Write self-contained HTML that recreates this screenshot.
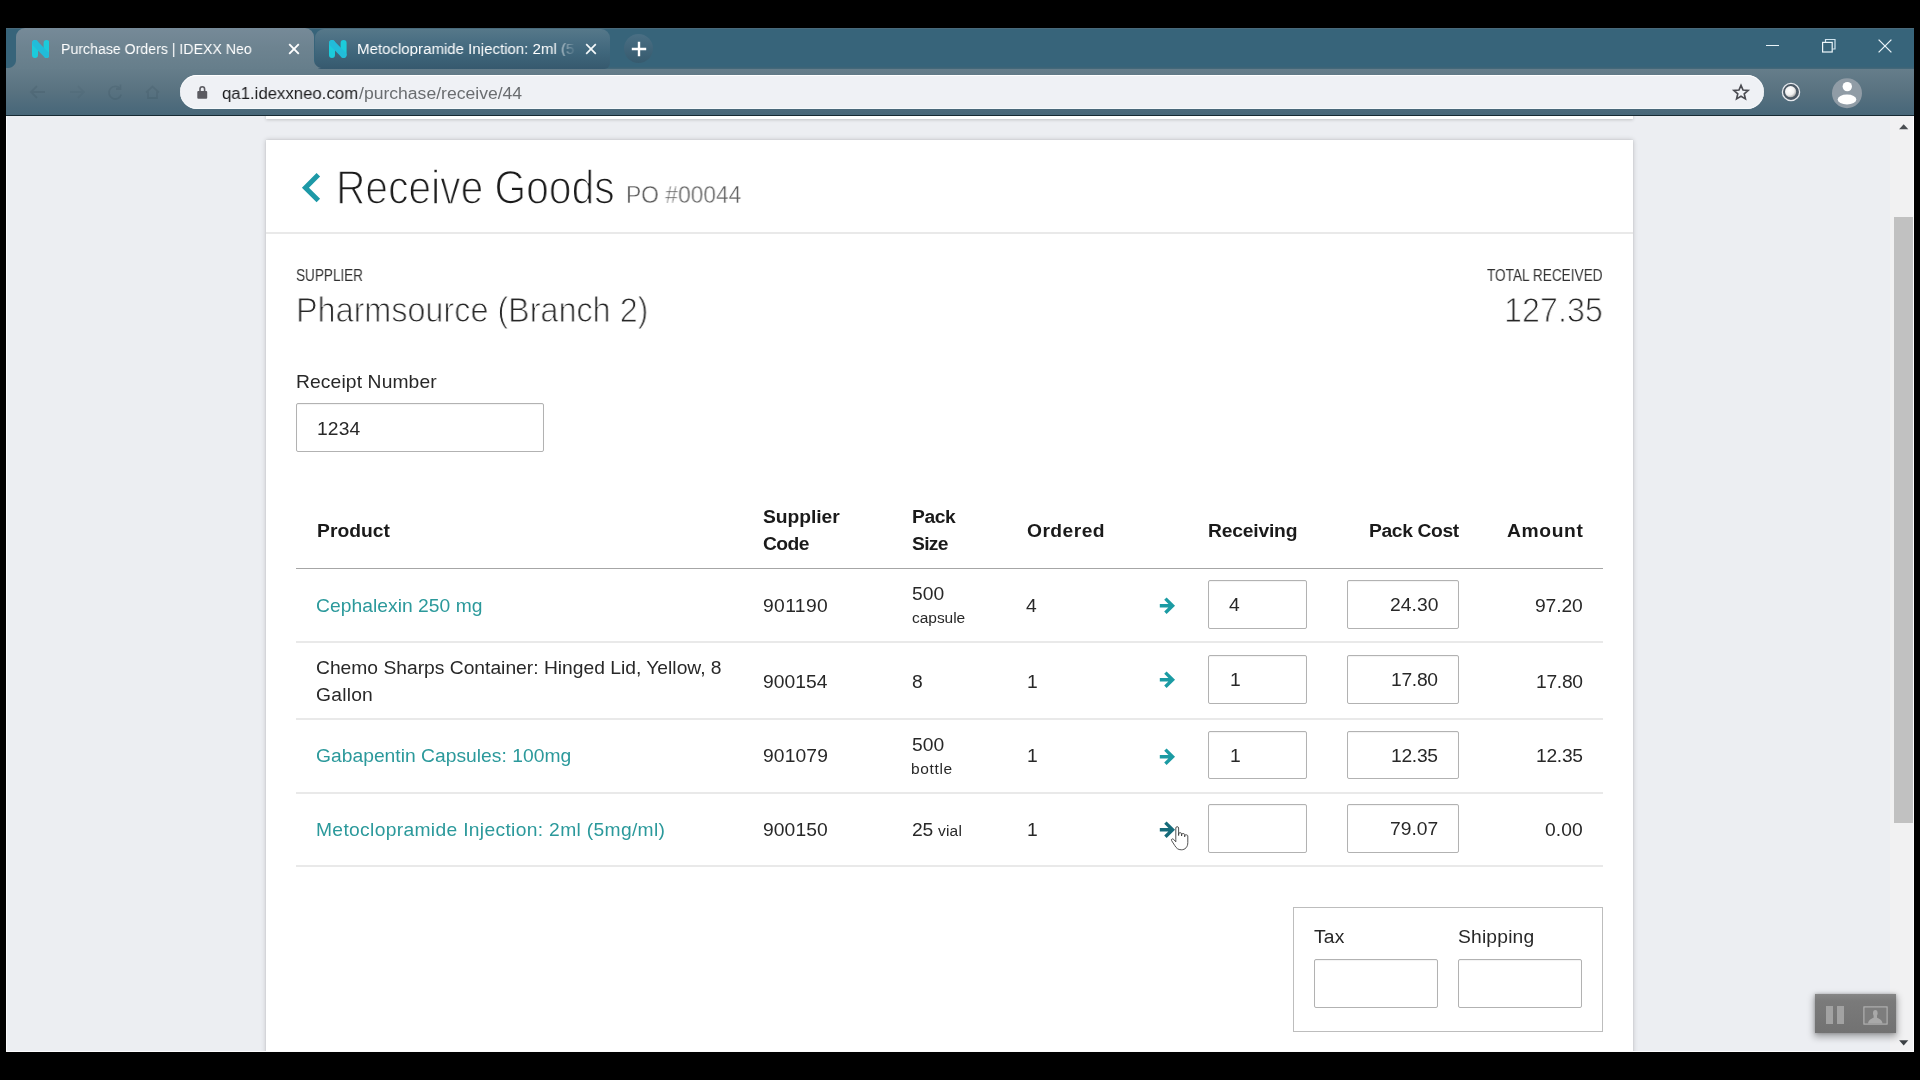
<!DOCTYPE html>
<html>
<head>
<meta charset="utf-8">
<title>Receive Goods</title>
<style>
html,body{margin:0;padding:0;}
body{width:1920px;height:1080px;background:#000;overflow:hidden;position:relative;font-family:"Liberation Sans",sans-serif;}
.a{position:absolute;}
.t{position:absolute;white-space:nowrap;line-height:1;font-family:"Liberation Sans",sans-serif;will-change:transform;}
#tabbar{left:6px;top:28px;width:1908px;height:41px;background:#37647a;box-shadow:inset 0 1px 0 #49697a;}
#toolbar{left:6px;top:68px;width:1908px;height:47px;background:linear-gradient(180deg,#667e8b 0%,#5a7381 45%,#4c6a7b 85%,#486779 100%);}
#tbline{left:6px;top:114.5px;width:1908px;height:1.5px;background:#172a33;}
#tab1{left:16px;top:28px;width:298px;height:41px;border-radius:9px 9px 0 0;background:linear-gradient(180deg,#768a98 0%,#6d8390 50%,#667e8b 100%);}
#tab1l{left:8px;top:60px;width:8px;height:8px;background:radial-gradient(circle at 0 0,rgba(0,0,0,0) 7.5px,#667e8b 8.5px);}
#tab1r{left:314px;top:60px;width:8px;height:8px;background:radial-gradient(circle at 100% 0,rgba(0,0,0,0) 7.5px,#667e8b 8.5px);}
#tab2{left:314.5px;top:28.5px;width:295.5px;height:40px;border-radius:9px 9px 6px 6px;background:linear-gradient(180deg,#567889 0%,#4a6f83 30%,#3f667b 60%,#36596e 100%);}
#newtab{left:624px;top:34px;width:29px;height:29px;border-radius:50%;background:linear-gradient(180deg,#4a6f84,#365a6e);}
#urlbar{left:180px;top:74.6px;width:1584px;height:34.8px;border-radius:17.5px;background:#eff1f5;box-shadow:inset 0 1px 0 #fff,inset 0 -1px 0 #f6fafc;}
#page{left:6px;top:116px;width:1884px;height:936px;background:#eceef2;overflow:hidden;}
#sbtrack{left:1890px;top:116px;width:24px;height:936px;background:#f1f1f2;}
#sbthumb{left:1894px;top:217px;width:19px;height:606px;background:#c1c1c1;}
#prevcard{left:260px;top:-10px;width:1367px;height:12.5px;background:#fff;box-shadow:0 1px 3px rgba(0,0,0,.18);}
#card{left:260px;top:24px;width:1367px;height:960px;background:#fff;box-shadow:0 0 5px rgba(0,0,0,.2),0 0 1px rgba(0,0,0,.12);}
.hr{position:absolute;height:1px;}
.inp{position:absolute;box-sizing:border-box;border:1px solid #b2b2b2;border-radius:2px;background:#fff;box-shadow:inset 0 1px 1px rgba(0,0,0,.05);}
</style>
</head>
<body>
<!-- browser chrome -->
<div class="a" id="tabbar"></div>
<div class="a" id="toolbar"></div>
<div class="a" id="tbline"></div>
<div class="a" style="left:322px;top:67px;width:1592px;height:2.2px;background:linear-gradient(180deg,#3a6276,#466a7b);"></div>
<div class="a" id="tab2"></div>
<div class="a" id="tab1"></div>
<div class="a" id="tab1l"></div>
<div class="a" id="tab1r"></div>
<div class="a" id="newtab"></div>
<div class="a" id="urlbar"></div>

<!-- faint nav icons -->
<svg class="a" style="left:28px;top:83px;opacity:.11" width="140" height="18" viewBox="0 0 140 18" fill="none" stroke="#1d323d" stroke-width="1.8"><path d="M17 9 H3 M9 3 L3 9 L9 15"/><path d="M42 9 H56 M50 3 L56 9 L50 15" opacity=".5"/><path d="M92 5.5 A6.3 6.3 0 1 0 93.3 11.5 M92.5 1.5 V6 H88"/><path d="M118 9.5 L124.5 3.5 L131 9.5 M120 8.5 V15 H129 V8.5"/></svg>
<!-- favicons -->
<svg class="a" style="left:31.7px;top:39.8px" width="17.6" height="18" viewBox="0 0 17.6 18"><path d="M3 3 V15 M14.6 3 V15" stroke="#1ccbdb" stroke-width="6" stroke-linecap="round" fill="none"/><path d="M3.3 3.3 L14.3 14.7" stroke="#22bcd9" stroke-width="6.2" stroke-linecap="round" fill="none"/></svg>
<svg class="a" style="left:329.4px;top:39.8px" width="17.6" height="18" viewBox="0 0 17.6 18"><path d="M3 3 V15 M14.6 3 V15" stroke="#1ccbdb" stroke-width="6" stroke-linecap="round" fill="none"/><path d="M3.3 3.3 L14.3 14.7" stroke="#22bcd9" stroke-width="6.2" stroke-linecap="round" fill="none"/></svg>
<!-- tab close buttons -->
<svg class="a" style="left:288px;top:43px" width="12" height="12" viewBox="0 0 12 12"><path d="M1.2 1.2 L10.8 10.8 M10.8 1.2 L1.2 10.8" stroke="#fff" stroke-width="1.9" fill="none"/></svg>
<svg class="a" style="left:585px;top:43px" width="12" height="12" viewBox="0 0 12 12"><path d="M1.2 1.2 L10.8 10.8 M10.8 1.2 L1.2 10.8" stroke="#f4f8fa" stroke-width="1.7" fill="none"/></svg>
<!-- new tab plus -->
<svg class="a" style="left:631px;top:41.3px" width="16" height="16" viewBox="0 0 16 16"><path d="M8 0.8 V15.2 M0.8 8 H15.2" stroke="#fff" stroke-width="2.4" fill="none"/></svg>
<!-- lock -->
<svg class="a" style="left:196px;top:85px" width="13" height="15" viewBox="0 0 13 15"><rect x="1.3" y="6" width="9.9" height="7.8" rx="1" fill="#5b5b61"/><path d="M4 6.4 V4.1 A2.3 2.3 0 0 1 8.6 4.1 V6.4" fill="none" stroke="#5b5b61" stroke-width="1.6"/></svg>
<!-- star -->
<svg class="a" style="left:1731px;top:82px" width="20" height="20" viewBox="0 0 20 20"><g transform="translate(10 10.2) scale(.9) translate(-10 -10)"><path d="M10 2.4 L12.25 7.6 L17.9 8.1 L13.6 11.85 L14.9 17.4 L10 14.45 L5.1 17.4 L6.4 11.85 L2.1 8.1 L7.75 7.6 Z" fill="none" stroke="#4a4b51" stroke-width="1.85" stroke-linejoin="miter"/></g></svg>
<!-- extension ball -->
<svg class="a" style="left:1780px;top:81px" width="22" height="22" viewBox="0 0 22 22"><defs><radialGradient id="gb" cx="0.4" cy="0.38" r="0.7"><stop offset="0" stop-color="#ffffff"/><stop offset="0.6" stop-color="#f1f1f1"/><stop offset="1" stop-color="#9a9a9a"/></radialGradient></defs><circle cx="11" cy="11" r="8.6" fill="#4d5a66" stroke="#e6e9ee" stroke-width="1.3"/><circle cx="10.6" cy="10.7" r="5.6" fill="url(#gb)"/></svg>
<!-- avatar -->
<svg class="a" style="left:1831px;top:77px" width="32" height="32" viewBox="0 0 32 32"><circle cx="16" cy="16.2" r="15" fill="#909ca6"/><circle cx="16.3" cy="9.6" r="4.7" fill="#fff"/><ellipse cx="16" cy="22.5" rx="9.3" ry="5" fill="#fff"/></svg>
<!-- window controls -->
<div class="a" style="left:1766px;top:45px;width:13px;height:1.3px;background:#e8f3f8;"></div>
<svg class="a" style="left:1820px;top:37px" width="18" height="18" viewBox="0 0 18 18"><path d="M5.5 5 V2.5 H15 V12 H12.5" fill="none" stroke="#cfe3ee" stroke-width="1.2"/><rect x="2.6" y="5.4" width="9.6" height="9.6" fill="none" stroke="#eef7fb" stroke-width="1.2"/></svg>
<svg class="a" style="left:1877px;top:38px" width="16" height="16" viewBox="0 0 16 16"><path d="M1.6 1.6 L14.4 14.4 M14.4 1.6 L1.6 14.4" stroke="#e8f3f8" stroke-width="1.3" fill="none"/></svg>


<!-- page -->
<div class="a" id="page">
  <div class="a" id="prevcard"></div>
  <div class="a" id="card"></div>
</div>
<div class="a" id="sbtrack"></div>
<div class="a" id="sbthumb"></div>

<!-- header divider -->
<div class="hr" style="left:266px;top:232px;width:1367px;height:1.6px;background:#e9e9e9;"></div>
<!-- back chevron -->
<svg class="a" style="left:300px;top:170px" width="24" height="34" viewBox="0 0 24 34"><path d="M18.33 4.77 L5.45 17.65 L18.33 30.53" fill="none" stroke="#1d99a7" stroke-width="5" stroke-linejoin="miter" stroke-linecap="butt"/></svg>
<!-- receipt input -->
<div class="inp" style="left:296px;top:403px;width:248px;height:49px;"></div>
<!-- table lines -->
<div class="hr" style="left:296px;top:568px;width:1307px;background:#a6a6a6;"></div>
<div class="hr" style="left:296px;top:641px;width:1307px;height:2px;background:#e9e9e9;"></div>
<div class="hr" style="left:296px;top:718.3px;width:1307px;height:2px;background:#e9e9e9;"></div>
<div class="hr" style="left:296px;top:791.5px;width:1307px;height:2px;background:#e9e9e9;"></div>
<div class="hr" style="left:296px;top:865.3px;width:1307px;height:2px;background:#e9e9e9;"></div>
<!-- row inputs -->
<div class="inp" style="left:1208px;top:580px;width:99px;height:48.5px;"></div>
<div class="inp" style="left:1347px;top:580px;width:112px;height:48.5px;"></div>
<div class="inp" style="left:1208px;top:655px;width:99px;height:48.5px;"></div>
<div class="inp" style="left:1347px;top:655px;width:112px;height:48.5px;"></div>
<div class="inp" style="left:1208px;top:730.5px;width:99px;height:48.5px;"></div>
<div class="inp" style="left:1347px;top:730.5px;width:112px;height:48.5px;"></div>
<div class="inp" style="left:1208px;top:804px;width:99px;height:48.5px;"></div>
<div class="inp" style="left:1347px;top:804px;width:112px;height:48.5px;"></div>
<!-- arrows -->
<svg class="a arr" style="left:1158px;top:596px" width="20" height="20" viewBox="0 0 20 20"><path d="M1.8 9.7 H12.5 M7.4 2.6 L14.6 9.7 L7.4 16.8" fill="none" stroke="#1b9ba3" stroke-width="3.4"/></svg>
<svg class="a arr" style="left:1158px;top:669.5px" width="20" height="20" viewBox="0 0 20 20"><path d="M1.8 9.7 H12.5 M7.4 2.6 L14.6 9.7 L7.4 16.8" fill="none" stroke="#1b9ba3" stroke-width="3.4"/></svg>
<svg class="a arr" style="left:1158px;top:746.5px" width="20" height="20" viewBox="0 0 20 20"><path d="M1.8 9.7 H12.5 M7.4 2.6 L14.6 9.7 L7.4 16.8" fill="none" stroke="#1b9ba3" stroke-width="3.4"/></svg>
<svg class="a arr" style="left:1158px;top:820.3px" width="20" height="20" viewBox="0 0 20 20"><path d="M1.8 9.7 H12.5 M7.4 2.6 L14.6 9.7 L7.4 16.8" fill="none" stroke="#166b7a" stroke-width="3.4"/></svg>
<!-- tax/shipping box -->
<div class="a" style="left:1292.5px;top:907px;width:310.5px;height:124.5px;box-sizing:border-box;border:1px solid #bdbdbd;background:#fff;"></div>
<div class="inp" style="left:1314px;top:958.5px;width:124px;height:49px;"></div>
<div class="inp" style="left:1458px;top:958.5px;width:124px;height:49px;"></div>


<div class="t" id="x_tab1" style="left:60.78px;top:41.00px;font-size:15.3px;font-weight:400;color:#fff;letter-spacing:0.000px;/*sx*/transform:scaleX(0.9246);transform-origin:0 0;">Purchase Orders | IDEXX Neo</div>
<div class="t" id="x_tab2" style="left:357.21px;top:41.00px;font-size:15.3px;font-weight:400;color:#fff;letter-spacing:0.000px;/*sx*/-webkit-mask-image:linear-gradient(90deg,#000 0%,#000 91%,rgba(0,0,0,0.15) 99%);mask-image:linear-gradient(90deg,#000 0%,#000 91%,rgba(0,0,0,0.15) 99%);transform:scaleX(0.9833);transform-origin:0 0;">Metoclopramide Injection: 2ml (5</div>
<div class="t" id="x_url1" style="left:222.21px;top:85.00px;font-size:17.25px;font-weight:400;color:#1d1d1f;letter-spacing:0.000px;/*sx*/transform:scaleX(0.9720);transform-origin:0 0;">qa1.idexxneo.com</div>
<div class="t" id="x_url2" style="left:358.87px;top:85.00px;font-size:17.25px;font-weight:400;color:#6a6d70;letter-spacing:0.000px;/*sx*/transform:scaleX(1.0186);transform-origin:0 0;">/purchase/receive/44</div>
<div class="t" id="x_h1" style="left:336.12px;top:164.00px;font-size:47.25px;font-weight:400;color:#1a1a1a;letter-spacing:0.000px;/*sx*/-webkit-text-stroke:1.5px #fff;transform:scaleX(0.8623);transform-origin:0 0;">Receive Goods</div>
<div class="t" id="x_po" style="left:626.15px;top:184.00px;font-size:23px;font-weight:400;color:#5c5c5c;letter-spacing:0.000px;/*sx*/-webkit-text-stroke:0.4px #fff;transform:scaleX(0.9915);transform-origin:0 0;">PO #00044</div>
<div class="t" id="x_sup" style="left:295.99px;top:268.00px;font-size:15.75px;font-weight:400;color:#303030;letter-spacing:0.000px;/*sx*/transform:scaleX(0.8593);transform-origin:0 0;">SUPPLIER</div>
<div class="t" id="x_pharm" style="left:295.82px;top:293.00px;font-size:34.25px;font-weight:400;color:#262626;letter-spacing:0.000px;/*sx*/-webkit-text-stroke:1.0px #fff;transform:scaleX(0.9444);transform-origin:0 0;">Pharmsource (Branch 2)</div>
<div class="t" id="x_tot" style="left:1486.62px;top:268.00px;font-size:15.75px;font-weight:400;color:#303030;letter-spacing:0.000px;/*sx*/transform:scaleX(0.8648);transform-origin:0 0;">TOTAL RECEIVED</div>
<div class="t" id="x_totv" style="left:1503.77px;top:293.00px;font-size:34.25px;font-weight:400;color:#262626;letter-spacing:0.000px;/*sx*/-webkit-text-stroke:1.0px #fff;transform:scaleX(0.9434);transform-origin:0 0;">127.35</div>
<div class="t" id="x_rcpt" style="left:296.45px;top:372.00px;font-size:19.25px;font-weight:400;color:#282828;letter-spacing:0.124px;">Receipt Number</div>
<div class="t" id="x_rcptv" style="left:317.33px;top:419.00px;font-size:19.25px;font-weight:400;color:#282828;letter-spacing:0.119px;">1234</div>
<div class="t" id="x_thp" style="left:316.55px;top:521.00px;font-size:19.25px;font-weight:700;color:#1a1a1a;letter-spacing:0.036px;">Product</div>
<div class="t" id="x_ths1" style="left:762.98px;top:507.00px;font-size:19.25px;font-weight:700;color:#1a1a1a;letter-spacing:-0.048px;">Supplier</div>
<div class="t" id="x_ths2" style="left:762.99px;top:534.00px;font-size:19.25px;font-weight:700;color:#1a1a1a;letter-spacing:-0.539px;">Code</div>
<div class="t" id="x_thk1" style="left:912.05px;top:507.00px;font-size:19.25px;font-weight:700;color:#1a1a1a;letter-spacing:-0.449px;">Pack</div>
<div class="t" id="x_thk2" style="left:911.73px;top:534.00px;font-size:19.25px;font-weight:700;color:#1a1a1a;letter-spacing:-0.708px;">Size</div>
<div class="t" id="x_tho" style="left:1026.74px;top:521.00px;font-size:19.25px;font-weight:700;color:#1a1a1a;letter-spacing:0.441px;">Ordered</div>
<div class="t" id="x_thr" style="left:1208.25px;top:521.00px;font-size:19.25px;font-weight:700;color:#1a1a1a;letter-spacing:-0.189px;">Receiving</div>
<div class="t" id="x_thc" style="left:1368.75px;top:521.00px;font-size:19.25px;font-weight:700;color:#1a1a1a;letter-spacing:-0.370px;">Pack Cost</div>
<div class="t" id="x_tha" style="left:1507.37px;top:521.00px;font-size:19.25px;font-weight:700;color:#1a1a1a;letter-spacing:0.631px;">Amount</div>
<div class="t" id="x_r1p" style="left:315.75px;top:596.00px;font-size:19.25px;font-weight:400;color:#2b999b;letter-spacing:0.040px;">Cephalexin 250 mg</div>
<div class="t" id="x_r1s" style="left:762.92px;top:596.00px;font-size:19.25px;font-weight:400;color:#282828;letter-spacing:0.383px;">901190</div>
<div class="t" id="x_r1k" style="left:911.67px;top:584.00px;font-size:19.25px;font-weight:400;color:#282828;letter-spacing:-0.004px;">500</div>
<div class="t" id="x_r1u" style="left:911.85px;top:610.00px;font-size:15.5px;font-weight:400;color:#282828;letter-spacing:-0.030px;">capsule</div>
<div class="t" id="x_r1o" style="left:1026.35px;top:596.00px;font-size:19.25px;font-weight:400;color:#282828;letter-spacing:0.000px;">4</div>
<div class="t" id="x_r1r" style="left:1229.10px;top:595.00px;font-size:19.25px;font-weight:400;color:#282828;letter-spacing:0.000px;">4</div>
<div class="t" id="x_r1c" style="left:1389.75px;top:595.00px;font-size:19.25px;font-weight:400;color:#282828;letter-spacing:0.040px;">24.30</div>
<div class="t" id="x_r1a" style="left:1535.42px;top:596.00px;font-size:19.25px;font-weight:400;color:#282828;letter-spacing:-0.128px;">97.20</div>
<div class="t" id="x_r2p1" style="left:315.75px;top:658.00px;font-size:19.25px;font-weight:400;color:#282828;letter-spacing:-0.000px;">Chemo Sharps Container: Hinged Lid, Yellow, 8</div>
<div class="t" id="x_r2p2" style="left:315.75px;top:685.00px;font-size:19.25px;font-weight:400;color:#282828;letter-spacing:0.227px;">Gallon</div>
<div class="t" id="x_r2s" style="left:762.92px;top:672.00px;font-size:19.25px;font-weight:400;color:#282828;letter-spacing:0.055px;">900154</div>
<div class="t" id="x_r2k" style="left:911.70px;top:672.00px;font-size:19.25px;font-weight:400;color:#282828;letter-spacing:0.000px;">8</div>
<div class="t" id="x_r2o" style="left:1026.83px;top:672.00px;font-size:19.25px;font-weight:400;color:#282828;letter-spacing:0.000px;">1</div>
<div class="t" id="x_r2r" style="left:1229.58px;top:670.00px;font-size:19.25px;font-weight:400;color:#282828;letter-spacing:0.000px;">1</div>
<div class="t" id="x_r2c" style="left:1391.08px;top:670.00px;font-size:19.25px;font-weight:400;color:#282828;letter-spacing:-0.292px;">17.80</div>
<div class="t" id="x_r2a" style="left:1536.08px;top:672.00px;font-size:19.25px;font-weight:400;color:#282828;letter-spacing:-0.292px;">17.80</div>
<div class="t" id="x_r3p" style="left:315.75px;top:746.00px;font-size:19.25px;font-weight:400;color:#2b999b;letter-spacing:0.018px;">Gabapentin Capsules: 100mg</div>
<div class="t" id="x_r3s" style="left:762.92px;top:746.00px;font-size:19.25px;font-weight:400;color:#282828;letter-spacing:0.127px;">901079</div>
<div class="t" id="x_r3k" style="left:911.67px;top:735.00px;font-size:19.25px;font-weight:400;color:#282828;letter-spacing:-0.004px;">500</div>
<div class="t" id="x_r3u" style="left:911.47px;top:761.00px;font-size:15.5px;font-weight:400;color:#282828;letter-spacing:0.638px;">bottle</div>
<div class="t" id="x_r3o" style="left:1026.83px;top:746.00px;font-size:19.25px;font-weight:400;color:#282828;letter-spacing:0.000px;">1</div>
<div class="t" id="x_r3r" style="left:1229.58px;top:746.00px;font-size:19.25px;font-weight:400;color:#282828;letter-spacing:0.000px;">1</div>
<div class="t" id="x_r3c" style="left:1391.08px;top:746.00px;font-size:19.25px;font-weight:400;color:#282828;letter-spacing:-0.274px;">12.35</div>
<div class="t" id="x_r3a" style="left:1536.08px;top:746.00px;font-size:19.25px;font-weight:400;color:#282828;letter-spacing:-0.274px;">12.35</div>
<div class="t" id="x_r4p" style="left:316.45px;top:820.00px;font-size:19.25px;font-weight:400;color:#2b999b;letter-spacing:0.324px;">Metoclopramide Injection: 2ml (5mg/ml)</div>
<div class="t" id="x_r4s" style="left:762.92px;top:820.00px;font-size:19.25px;font-weight:400;color:#282828;letter-spacing:0.098px;">900150</div>
<div class="t" id="x_r4k" style="left:911.50px;top:820.00px;font-size:19.25px;font-weight:400;color:#282828;letter-spacing:-0.267px;">25</div>
<div class="t" id="x_r4u" style="left:937.78px;top:823.00px;font-size:15.5px;font-weight:400;color:#282828;letter-spacing:0.211px;">vial</div>
<div class="t" id="x_r4o" style="left:1026.83px;top:820.00px;font-size:19.25px;font-weight:400;color:#282828;letter-spacing:0.000px;">1</div>
<div class="t" id="x_r4c" style="left:1390.00px;top:819.00px;font-size:19.25px;font-weight:400;color:#282828;letter-spacing:0.029px;">79.07</div>
<div class="t" id="x_r4a" style="left:1545.29px;top:820.00px;font-size:19.25px;font-weight:400;color:#282828;letter-spacing:0.115px;">0.00</div>
<div class="t" id="x_tax" style="left:1313.80px;top:927.00px;font-size:19.25px;font-weight:400;color:#282828;letter-spacing:0.234px;">Tax</div>
<div class="t" id="x_ship" style="left:1457.87px;top:927.00px;font-size:19.25px;font-weight:400;color:#282828;letter-spacing:0.181px;">Shipping</div>

<!-- window 1px white border -->
<div class="a" style="left:6px;top:116px;width:1px;height:936px;background:#fcfcfd;"></div>
<div class="a" style="left:6px;top:1051px;width:1908px;height:1px;background:#fcfcfd;"></div>
<div class="a" style="left:1913px;top:116px;width:1px;height:936px;background:#fcfcfd;"></div>
<!-- scrollbar arrows -->
<svg class="a" style="left:1899px;top:124px" width="10" height="6" viewBox="0 0 10 6"><path d="M4.7 0.2 L9.3 5.3 H0.1 Z" fill="#4a4e52"/></svg>
<svg class="a" style="left:1899px;top:1039.6px" width="10" height="6" viewBox="0 0 10 6"><path d="M4.7 5.4 L9.3 0.3 H0.1 Z" fill="#3c4044"/></svg>
<!-- screen recorder widget -->
<div class="a" style="left:1815px;top:994px;width:81px;height:39px;background:linear-gradient(180deg,#868686 0%,#7a7a7a 18%,#727272 100%);box-shadow:0 3px 7px 1px rgba(0,0,0,.33),0 0 3px rgba(0,0,0,.2);"></div>
<div class="a" style="left:1825.5px;top:1006px;width:7px;height:17.7px;background:#a2a2a2;"></div>
<div class="a" style="left:1837.4px;top:1006px;width:7px;height:17.7px;background:#a2a2a2;"></div>
<svg class="a" style="left:1862.5px;top:1005.5px" width="25" height="19" viewBox="0 0 25 19"><rect x="0.9" y="0.9" width="23.2" height="17.2" fill="#7d7d7d" stroke="#b4b4b4" stroke-width="1.1"/><ellipse cx="12.3" cy="7.2" rx="2.3" ry="3.1" fill="#a9a9a9"/><path d="M5 17.6 C5.6 13.6 8.6 12.6 10.6 11.8 L10.6 9.6 H14 L14 11.8 C16 12.6 19 13.6 19.6 17.6 Z" fill="#a9a9a9"/></svg>
<!-- hand cursor -->
<svg class="a" style="left:1169.7px;top:825px" width="22" height="28" viewBox="0 0 22 28"><path d="M5.8 14.5 V3 C5.8 1.2 8.6 1.2 8.6 3 V10.5 V8.8 C8.6 7.3 11.6 7.3 11.6 8.8 V11 V9.6 C11.6 8.2 14.7 8.2 14.7 9.6 V11.8 V10.8 C14.7 9.4 17.8 9.5 17.8 11 V17.5 C17.8 22 15.2 24.8 11.3 24.8 C8 24.8 6.4 23.2 4.8 20.6 L1.6 15.6 C0.8 14.2 2.6 13.2 3.7 14.4 L5.8 16.8 Z" fill="#fff" stroke="#1c1c1c" stroke-width="0.9" stroke-linejoin="round" opacity="0.85"/></svg>
</body>
</html>
